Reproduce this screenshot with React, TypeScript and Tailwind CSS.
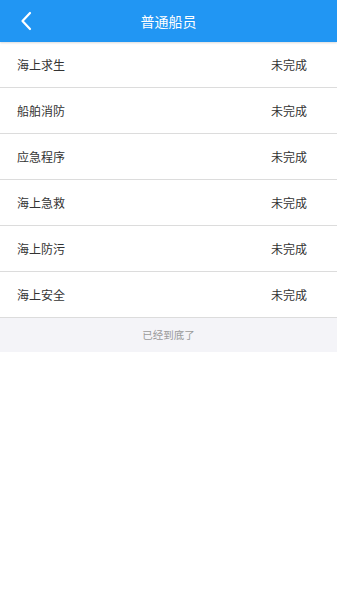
import React from 'react';

const ITEMS = ['海上求生', '船舶消防', '应急程序', '海上急救', '海上防污', '海上安全'];

export default function App() {
  return (
    <div
      className="min-h-[600px] w-full bg-white"
      style={{ fontFamily: '"Noto Sans CJK SC", "Noto Sans", sans-serif' }}
    >
      {/* Header */}
      <div className="relative flex h-[42px] items-center justify-center bg-[#2196f3] shadow-[0_1px_2px_rgba(0,0,0,0.15)]">
        <button className="absolute left-[16px] top-[9px] flex h-[24px] w-[20px] items-center justify-center">
          <svg width="12" height="20" viewBox="0 0 12 20" fill="none">
            <path d="M10 2 L2.5 10 L10 18" stroke="white" strokeWidth="2.2" strokeLinecap="round" strokeLinejoin="round" />
          </svg>
        </button>
        <span className="text-[14px] text-white">普通船员</span>
      </div>

      {/* List */}
      <div>
        {ITEMS.map((name) => (
          <div
            key={name}
            className="flex h-[46px] items-center justify-between border-b border-[#dcdcdc] pl-[17px] pr-[30px] text-[12px] text-[#333]"
          >
            <span>{name}</span>
            <span>未完成</span>
          </div>
        ))}
      </div>

      {/* Footer */}
      <div className="flex h-[34px] items-center justify-center bg-[#f4f4f8] text-[10.5px] text-[#9a9a9a]">
        已经到底了
      </div>
    </div>
  );
}
